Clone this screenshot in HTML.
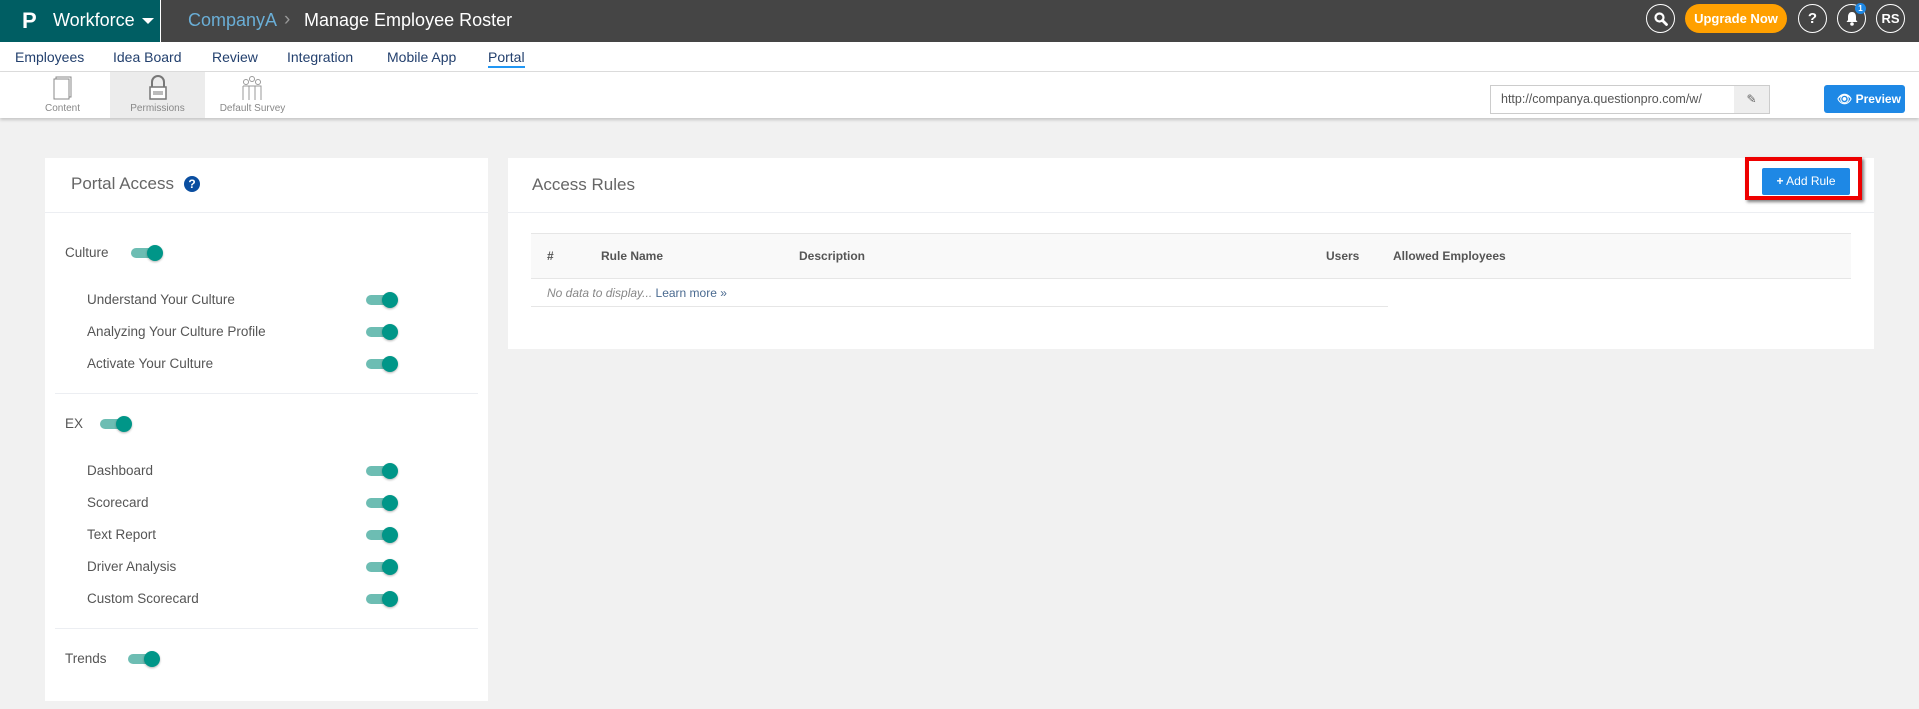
<!DOCTYPE html>
<html><head><meta charset="utf-8">
<style>
*{margin:0;padding:0;box-sizing:border-box}
body{width:1919px;height:709px;overflow:hidden;background:#f1f1f1;font-family:"Liberation Sans",sans-serif;position:relative}
.a{position:absolute}
.top{left:0;top:0;width:1919px;height:42px;background:#454545}
.brand{left:0;top:0;width:161px;height:42px;background:#005e63;border-right:1px solid #fff}
.circ{width:29px;height:29px;border:1.5px solid #fff;border-radius:50%;color:#fff;font-weight:bold;display:flex;align-items:center;justify-content:center;font-size:15px;top:4px}
.nav{left:0;top:42px;width:1919px;height:30px;background:#fff;border-bottom:1px solid #ddd}
.nav span{position:absolute;top:7px;font-size:14px;color:#23406e}
.sub{left:0;top:72px;width:1919px;height:46px;background:#fff;box-shadow:0 2px 3px rgba(0,0,0,.18)}
.sub .lbl{position:absolute;top:31px;font-size:10px;color:#888;width:95px;text-align:center}
.panel{background:#fff}
.tg{width:32px;height:16px}
.tg:before{content:"";position:absolute;left:0;top:3px;width:28px;height:10px;border-radius:5px;background:#6dbdb3}
.tg:after{content:"";position:absolute;left:16px;top:0;width:16px;height:16px;border-radius:50%;background:#009688;box-shadow:0 1px 2px rgba(0,0,0,.3)}
.it{font-size:13.5px;color:#555}
</style></head><body>
<div class="a top"></div>
<div class="a brand"></div>
<div class="a" style="left:22px;top:8px;color:#fff;font-size:22px;font-weight:bold">P</div>
<div class="a" style="left:53px;top:10px;color:#fff;font-size:18px">Workforce</div>
<div class="a" style="left:142px;top:18px;width:0;height:0;border-left:6px solid transparent;border-right:6px solid transparent;border-top:6px solid #fff"></div>
<div class="a" style="left:188px;top:10px;color:#6aaed6;font-size:18px">CompanyA</div>
<div class="a" style="left:284px;top:9px;color:#999;font-size:19px">›</div>
<div class="a" style="left:304px;top:10px;color:#fff;font-size:18px">Manage Employee Roster</div>
<div class="a circ" style="left:1646px"><svg width="14" height="14" viewBox="0 0 14 14"><circle cx="5.5" cy="5.5" r="4" stroke="#fff" stroke-width="2.2" fill="none"/><path d="M8.5 8.5L12.5 12.5" stroke="#fff" stroke-width="2.8" stroke-linecap="round"/></svg></div>
<div class="a" style="left:1685px;top:4px;width:102px;height:29px;border-radius:15px;background:#ffa000;color:#fff;font-weight:bold;font-size:13px;text-align:center;line-height:29px">Upgrade Now</div>
<div class="a circ" style="left:1798px">?</div>
<div class="a circ" style="left:1837px"><svg width="14" height="15" viewBox="0 0 14 15"><path d="M7 1C4 1 3 3.5 3 6v3L1.5 11h11L11 9V6c0-2.5-1-5-4-5z" fill="#fff"/><circle cx="7" cy="13" r="1.8" fill="#fff"/></svg></div>
<div class="a" style="left:1855px;top:3px;width:11px;height:11px;border-radius:50%;background:#1e88e5;color:#fff;font-size:8px;font-weight:bold;text-align:center;line-height:11px">1</div>
<div class="a circ" style="left:1876px;font-size:13px">RS</div>

<div class="a nav">
<span style="left:15px">Employees</span><span style="left:113px">Idea Board</span><span style="left:212px">Review</span><span style="left:287px">Integration</span><span style="left:387px">Mobile App</span><span style="left:488px;border-bottom:2px solid #2196f3;padding-bottom:1px">Portal</span>
</div>
<div class="a sub">
<div class="a" style="left:110px;top:0;width:95px;height:46px;background:#ececec"></div>
<svg class="a" style="left:52px;top:4px" width="22" height="24" viewBox="0 0 22 24"><rect x="4" y="1" width="15" height="20" fill="#fff" stroke="#888"/><rect x="2" y="3" width="15" height="20" fill="#fff" stroke="#888"/></svg>
<svg class="a" style="left:147px;top:3px" width="22" height="26" viewBox="0 0 22 26"><path d="M5 12V7a6 6 0 0 1 12 0v5" fill="none" stroke="#777" stroke-width="2"/><rect x="3" y="12" width="16" height="12" fill="#fff" stroke="#777" stroke-width="1.5"/><path d="M6 17h10M6 19h10" stroke="#777"/></svg>
<svg class="a" style="left:241px;top:3px" width="22" height="26" viewBox="0 0 22 26"><circle cx="11" cy="4" r="2.5" fill="none" stroke="#999"/><circle cx="5" cy="7" r="2.5" fill="none" stroke="#999"/><circle cx="17" cy="7" r="2.5" fill="none" stroke="#999"/><path d="M2 11h6v14M14 11h6v14M8 11h6v14M2 11v14" fill="none" stroke="#999"/></svg>
<div class="lbl" style="left:15px">Content</div>
<div class="lbl" style="left:110px">Permissions</div>
<div class="lbl" style="left:205px">Default Survey</div>
<div class="a" style="left:1490px;top:13px;width:280px;height:29px;border:1px solid #ccc;background:#fff"></div>
<div class="a" style="left:1734px;top:14px;width:35px;height:27px;background:#eee;color:#666;font-size:12px;text-align:center;line-height:27px">✎</div>
<div class="a" style="left:1501px;top:20px;font-size:12.5px;color:#555">http://companya.questionpro.com/w/</div>
<div class="a" style="left:1824px;top:13px;width:81px;height:28px;background:#1e88e5;border-radius:3px;color:#fff;font-size:12px;font-weight:bold;line-height:28px;padding-left:13px">👁 Preview</div>
</div>

<div class="a panel" style="left:45px;top:158px;width:443px;height:543px"></div>
<div class="a" style="left:45px;top:212px;width:443px;height:1px;background:#eceef2"></div>
<div class="a" style="left:71px;top:174px;font-size:17px;color:#666">Portal Access</div>
<div class="a" style="left:184px;top:176px;width:16px;height:16px;border-radius:50%;background:#0a4ea0;color:#fff;font-size:12px;font-weight:bold;text-align:center;line-height:16px">?</div>
<div class="a it" style="left:65px;top:245px">Culture</div><div class="a tg" style="left:131px;top:245px"></div>
<div class="a it" style="left:87px;top:292px">Understand Your Culture</div><div class="a tg" style="left:366px;top:292px"></div>
<div class="a it" style="left:87px;top:324px">Analyzing Your Culture Profile</div><div class="a tg" style="left:366px;top:324px"></div>
<div class="a it" style="left:87px;top:356px">Activate Your Culture</div><div class="a tg" style="left:366px;top:356px"></div>
<div class="a" style="left:55px;top:393px;width:423px;height:1px;background:#eceef2"></div>
<div class="a it" style="left:65px;top:416px">EX</div><div class="a tg" style="left:100px;top:416px"></div>
<div class="a it" style="left:87px;top:463px">Dashboard</div><div class="a tg" style="left:366px;top:463px"></div>
<div class="a it" style="left:87px;top:495px">Scorecard</div><div class="a tg" style="left:366px;top:495px"></div>
<div class="a it" style="left:87px;top:527px">Text Report</div><div class="a tg" style="left:366px;top:527px"></div>
<div class="a it" style="left:87px;top:559px">Driver Analysis</div><div class="a tg" style="left:366px;top:559px"></div>
<div class="a it" style="left:87px;top:591px">Custom Scorecard</div><div class="a tg" style="left:366px;top:591px"></div>
<div class="a" style="left:55px;top:628px;width:423px;height:1px;background:#eceef2"></div>
<div class="a it" style="left:65px;top:651px">Trends</div><div class="a tg" style="left:128px;top:651px"></div>

<div class="a panel" style="left:508px;top:158px;width:1366px;height:191px"></div>
<div class="a" style="left:508px;top:212px;width:1366px;height:1px;background:#eceef2"></div>
<div class="a" style="left:532px;top:175px;font-size:17px;color:#666">Access Rules</div>
<div class="a" style="left:1745px;top:157px;width:117px;height:43px;border:4px solid #e00;box-shadow:2px 2px 3px rgba(0,0,0,.5)"></div>
<div class="a" style="left:1762px;top:168px;width:88px;height:27px;background:#1e88e5;border-radius:2px;color:#fff;font-size:12px;line-height:27px;text-align:center"><b>+</b> Add Rule</div>
<div class="a" style="left:531px;top:233px;width:1320px;height:46px;background:#f9f9f9;border-top:1px solid #e6e6e6;border-bottom:1px solid #e6e6e6"></div>
<div class="a" style="top:249px;left:547px;font-size:12px;font-weight:bold;color:#555">#</div>
<div class="a" style="top:249px;left:601px;font-size:12px;font-weight:bold;color:#555">Rule Name</div>
<div class="a" style="top:249px;left:799px;font-size:12px;font-weight:bold;color:#555">Description</div>
<div class="a" style="top:249px;left:1326px;font-size:12px;font-weight:bold;color:#555">Users</div>
<div class="a" style="top:249px;left:1393px;font-size:12px;font-weight:bold;color:#555">Allowed Employees</div>
<div class="a" style="top:286px;left:547px;font-size:12px;color:#888"><i>No data to display...</i> <span style="color:#4a6a90">Learn more »</span></div>
<div class="a" style="left:531px;top:306px;width:857px;height:1px;background:#e6e6e6"></div>
</body></html>
